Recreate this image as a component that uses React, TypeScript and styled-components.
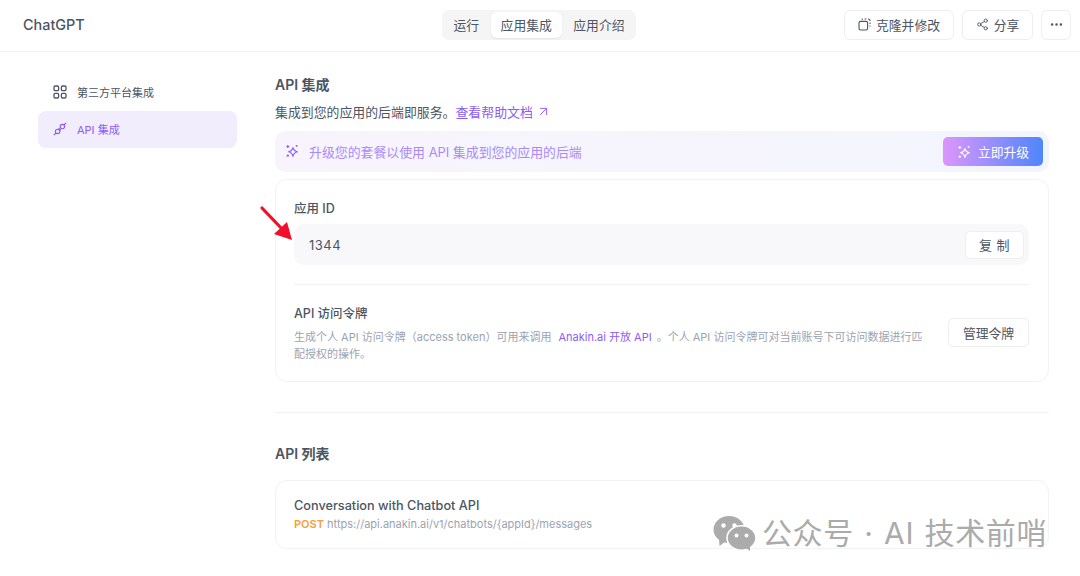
import React from "react";
import styled, { createGlobalStyle } from "styled-components";
import { ArrowUpRight, Ellipsis, Share2 } from "lucide-react";

const GlobalStyle = createGlobalStyle`
  html, body {
    margin: 0;
    padding: 0;
    background: #fff;
  }
  body {
    font-family: Inter, "Noto Sans CJK SC", sans-serif;
    color: #4b5563;
  }
  * {
    box-sizing: border-box;
  }
`;

const GridIcon = () => (
  <svg width="14" height="14" viewBox="0 0 14 14" fill="none" stroke="#4b5563" strokeWidth="1.3">
    <rect x="1" y="1" width="4.6" height="4.6" rx="1.2" />
    <rect x="8.4" y="1" width="4.6" height="4.6" rx="1.2" />
    <rect x="1" y="8.4" width="4.6" height="4.6" rx="1.2" />
    <rect x="8.4" y="8.4" width="4.6" height="4.6" rx="1.2" />
  </svg>
);

const PlugIcon = () => (
  <svg width="14" height="14" viewBox="0 0 14 14" fill="none" stroke="#8b5cf6" strokeWidth="1.1">
    <path d="M0.8 13.2 L3 11 M11 3 L13.2 0.8" />
    <circle cx="4.6" cy="9.4" r="2.2" />
    <circle cx="9.4" cy="4.6" r="2.2" />
    <path d="M5.6 6.4 L7.6 8.4" strokeWidth="1.6" />
  </svg>
);

const SparkIcon = ({ color, size }: { color: string; size: number }) => (
  <svg width={size} height={size} viewBox="0 0 14 14" fill="none" stroke={color} strokeWidth="1.1" strokeLinejoin="round">
    <path d="M8 3.6 C8.5 6 9.6 7 12.4 7.8 C9.6 8.5 8.5 9.6 8 12.4 C7.4 9.6 6.4 8.5 3.6 7.8 C6.4 7 7.4 6 8 3.6 Z" />
    <path d="M2.8 1 V4 M1.3 2.5 H4.3" />
    <path d="M2.8 10.4 V12.8 M1.6 11.6 H4" />
    <path d="M11.6 1 V2.8 M10.7 1.9 H12.5" />
  </svg>
);

const CloneIcon = () => (
  <svg width="13" height="13" viewBox="0 0 13 13" fill="none" stroke="#4b5563" strokeWidth="1.1">
    <rect x="1" y="3.4" width="8.6" height="8.6" rx="1.6" />
    <path d="M3.6 1.2 H5 M6.6 1 H8.4 M10 1 C11.2 1 12 1.8 12 3 M12 4.4 V6 M12 7.4 V8.6" />
  </svg>
);

const WeChatIcon = () => (
  <svg width="44" height="36" viewBox="0 0 44 36" fill="#ababab">
    <ellipse cx="17" cy="14.5" rx="15.5" ry="13.5" />
    <path d="M7 24 L7.5 31 L14 26 Z" />
    <circle cx="11.5" cy="10.5" r="2.2" fill="#fff" />
    <circle cx="22.5" cy="10.5" r="2.2" fill="#fff" />
    <ellipse cx="29.5" cy="23" rx="14.5" ry="12.2" stroke="#fff" strokeWidth="1.6" />
    <path d="M34 33 L38 36 L38 30 Z" />
    <circle cx="24.5" cy="20.5" r="2" fill="#fff" />
    <circle cx="34.5" cy="20.5" r="2" fill="#fff" />
  </svg>
);

export default function App() {
  return (
    <Page>
      <GlobalStyle />
      <Header>
        <Title>ChatGPT</Title>
        <Tabs>
          <Tab>运行</Tab>
          <Tab $active>应用集成</Tab>
          <Tab>应用介绍</Tab>
        </Tabs>
        <Actions>
          <HeaderButton $width={110}>
            <CloneIcon />
            克隆并修改
          </HeaderButton>
          <HeaderButton $width={71}>
            <Share2 size={13} strokeWidth={1.6} />
            分享
          </HeaderButton>
          <HeaderButton $width={30}>
            <Ellipsis size={15} strokeWidth={2} />
          </HeaderButton>
        </Actions>
      </Header>
      <Body>
        <Sidebar>
          <NavItem>
            <GridIcon />
            第三方平台集成
          </NavItem>
          <NavItem $active>
            <PlugIcon />
            API 集成
          </NavItem>
        </Sidebar>
        <Main>
          <Heading>API 集成</Heading>
          <Intro>
            集成到您的应用的后端即服务。
            <HelpLink>
              查看帮助文档
              <ArrowUpRight size={15} strokeWidth={1.5} />
            </HelpLink>
          </Intro>
          <Banner>
            <BannerText>
              <SparkIcon color="#8b5cf6" size={14} />
              升级您的套餐以使用 API 集成到您的应用的后端
            </BannerText>
            <UpgradeButton>
              <SparkIcon color="#fff" size={14} />
              立即升级
            </UpgradeButton>
          </Banner>
          <Card>
            <FieldLabel>应用 ID</FieldLabel>
            <IdField>
              1344
              <CopyButton>复 制</CopyButton>
            </IdField>
            <CardDivider />
            <TokenRow>
              <TokenText>
                <FieldLabel>API 访问令牌</FieldLabel>
                <TokenDesc>
                  生成个人 API 访问令牌（access token）可用来调用<AccentLink>Anakin.ai 开放 API</AccentLink>。个人 API 访问令牌可对当前账号下可访问数据进行匹配授权的操作。
                </TokenDesc>
              </TokenText>
              <ManageButton>管理令牌</ManageButton>
            </TokenRow>
          </Card>
          <SectionDivider />
          <ListHeading>API 列表</ListHeading>
          <ApiCard>
            <ApiName>Conversation with Chatbot API</ApiName>
            <ApiUrl>
              <Method>POST</Method> https://api.anakin.ai/v1/chatbots/{"{appId}"}/messages
            </ApiUrl>
          </ApiCard>
        </Main>
      </Body>
      <RedArrow width="38" height="38" viewBox="0 0 38 38">
        <path d="M3 3 L24 25" stroke="#f0102a" strokeWidth="3.2" strokeLinecap="round" />
        <path d="M33 35 L15 29 L28 17 Z" fill="#f0102a" />
      </RedArrow>
      <Watermark>
        <WeChatIcon />
        <WatermarkText>公众号 · AI 技术前哨</WatermarkText>
      </Watermark>
    </Page>
  );
}

const Page = styled.div`
  position: relative;
  width: 1080px;
  height: 576px;
  overflow: hidden;
  background: #fff;
`;

const Header = styled.header`
  display: grid;
  grid-template-columns: 1fr auto 1fr;
  align-items: center;
  height: 52px;
  padding: 0 9px 2px 23px;
  border-bottom: 1px solid #f1f1f3;
`;

const Title = styled.div`
  font-size: 14.4px;
  font-weight: 500;
  color: #4b5563;
`;

const Tabs = styled.div`
  display: flex;
  align-items: center;
  gap: 1.5px;
  height: 30px;
  padding: 2px;
  margin-left: -16px;
  background: #f5f5f6;
  border-radius: 7px;
`;

const Tab = styled.div<{ $active?: boolean }>`
  display: flex;
  align-items: center;
  padding: 0 10px;
  height: 26px;
  font-size: 12.8px;
  color: #4b5563;
  border-radius: 6px;
  background: ${(p) => (p.$active ? "#fff" : "transparent")};
  box-shadow: ${(p) => (p.$active ? "0 1px 2px rgba(0,0,0,0.08)" : "none")};
`;

const Actions = styled.div`
  display: flex;
  justify-content: flex-end;
  gap: 8px;
`;

const HeaderButton = styled.div<{ $width: number }>`
  display: flex;
  align-items: center;
  justify-content: center;
  gap: 5px;
  width: ${(p) => p.$width}px;
  height: 30px;
  font-size: 12.8px;
  color: #4b5563;
  background: #fff;
  border: 1px solid #eeeef0;
  border-radius: 6px;
`;

const Body = styled.div`
  display: flex;
  padding: 22px 31px 0 38px;
`;

const Sidebar = styled.nav`
  width: 199px;
  margin-right: 38px;
  flex-shrink: 0;
`;

const NavItem = styled.div<{ $active?: boolean }>`
  display: flex;
  align-items: center;
  gap: 10px;
  height: 37px;
  padding: 0 0 2px 15px;
  font-size: 11px;
  color: ${(p) => (p.$active ? "#8b5cf6" : "#4b5563")};
  background: ${(p) => (p.$active ? "#f1edfd" : "transparent")};
  border-radius: 8px;
`;

const Main = styled.main`
  flex: 1;
  min-width: 0;
`;

const Heading = styled.h2`
  margin: 0;
  font-size: 14px;
  line-height: 22px;
  font-weight: 600;
  color: #4b5563;
`;

const Intro = styled.div`
  display: flex;
  align-items: center;
  margin-top: 5px;
  height: 20px;
  font-size: 12.9px;
  color: #4b5563;
`;

const HelpLink = styled.span`
  display: inline-flex;
  align-items: center;
  gap: 3px;
  color: #8b5cf6;
`;

const Banner = styled.div`
  display: flex;
  align-items: center;
  justify-content: space-between;
  height: 41px;
  margin-top: 10px;
  padding: 0 6px 0 10px;
  border-radius: 10px;
  background: linear-gradient(90deg, #f8f4fe 0%, #f3f5fd 100%);
`;

const BannerText = styled.div`
  display: flex;
  align-items: center;
  gap: 10px;
  padding-bottom: 1px;
  font-size: 12.9px;
  color: #a78bfa;
`;

const UpgradeButton = styled.div`
  display: flex;
  align-items: center;
  justify-content: center;
  gap: 7px;
  width: 100px;
  height: 29px;
  font-size: 12.8px;
  color: #fff;
  border-radius: 5px;
  background: linear-gradient(90deg, #dc96fb 0%, #4f86fb 100%);
`;

const Card = styled.section`
  height: 203px;
  margin-top: 7px;
  padding: 20px 19px 0 18px;
  border: 1px solid #f2f2f4;
  border-radius: 12px;
`;

const FieldLabel = styled.div`
  font-size: 12.5px;
  line-height: 18px;
  font-weight: 500;
  color: #4b5563;
`;

const IdField = styled.div`
  display: flex;
  align-items: center;
  justify-content: space-between;
  height: 41px;
  margin-top: 6px;
  padding: 0 5px 0 15px;
  font-size: 13px;
  letter-spacing: 0.5px;
  color: #4b5563;
  background: #f8f8fa;
  border-radius: 10px;
`;

const CopyButton = styled.div`
  display: flex;
  align-items: center;
  justify-content: center;
  width: 59px;
  height: 28px;
  font-size: 13px;
  color: #4b5563;
  background: #fff;
  border: 1px solid #eeeef0;
  border-radius: 5px;
`;

const CardDivider = styled.div`
  height: 1px;
  margin-top: 19px;
  background: #f2f2f4;
`;

const TokenRow = styled.div`
  display: flex;
  align-items: flex-start;
  gap: 18px;
  margin-top: 20px;
`;

const TokenText = styled.div`
  flex: 1;
  min-width: 0;
`;

const TokenDesc = styled.p`
  margin: 6px 0 0;
  font-size: 11px;
  line-height: 17px;
  color: #9ca3af;
`;

const AccentLink = styled.span`
  padding: 0 5px 0 7px;
  color: #8b5cf6;
`;

const ManageButton = styled.div`
  display: flex;
  align-items: center;
  justify-content: center;
  flex-shrink: 0;
  margin-top: 13px;
  width: 81px;
  height: 29px;
  font-size: 12.8px;
  color: #4b5563;
  border: 1px solid #eeeef0;
  border-radius: 5px;
`;

const SectionDivider = styled.div`
  height: 1px;
  margin-top: 30px;
  background: #f2f2f4;
`;

const ListHeading = styled(Heading)`
  margin-top: 30px;
`;

const ApiCard = styled.section`
  height: 69px;
  margin-top: 15px;
  padding: 16px 18px 0;
  border: 1px solid #f2f2f4;
  border-radius: 12px;
`;

const ApiName = styled.div`
  font-size: 12.7px;
  line-height: 18px;
  font-weight: 500;
  color: #4b5563;
`;

const ApiUrl = styled.div`
  margin-top: 1px;
  font-size: 11px;
  line-height: 16px;
  color: #9ca3af;
`;

const Method = styled.span`
  font-weight: 600;
  color: #f59e3b;
`;

const RedArrow = styled.svg`
  position: absolute;
  left: 259px;
  top: 205px;
`;

const Watermark = styled.div`
  position: absolute;
  left: 712px;
  top: 514px;
  display: flex;
  align-items: center;
  gap: 6px;
`;

const WatermarkText = styled.div`
  font-size: 30px;
  line-height: 38px;
  letter-spacing: 0.6px;
  word-spacing: 1.5px;
  white-space: nowrap;
  color: #ababab;
`;
